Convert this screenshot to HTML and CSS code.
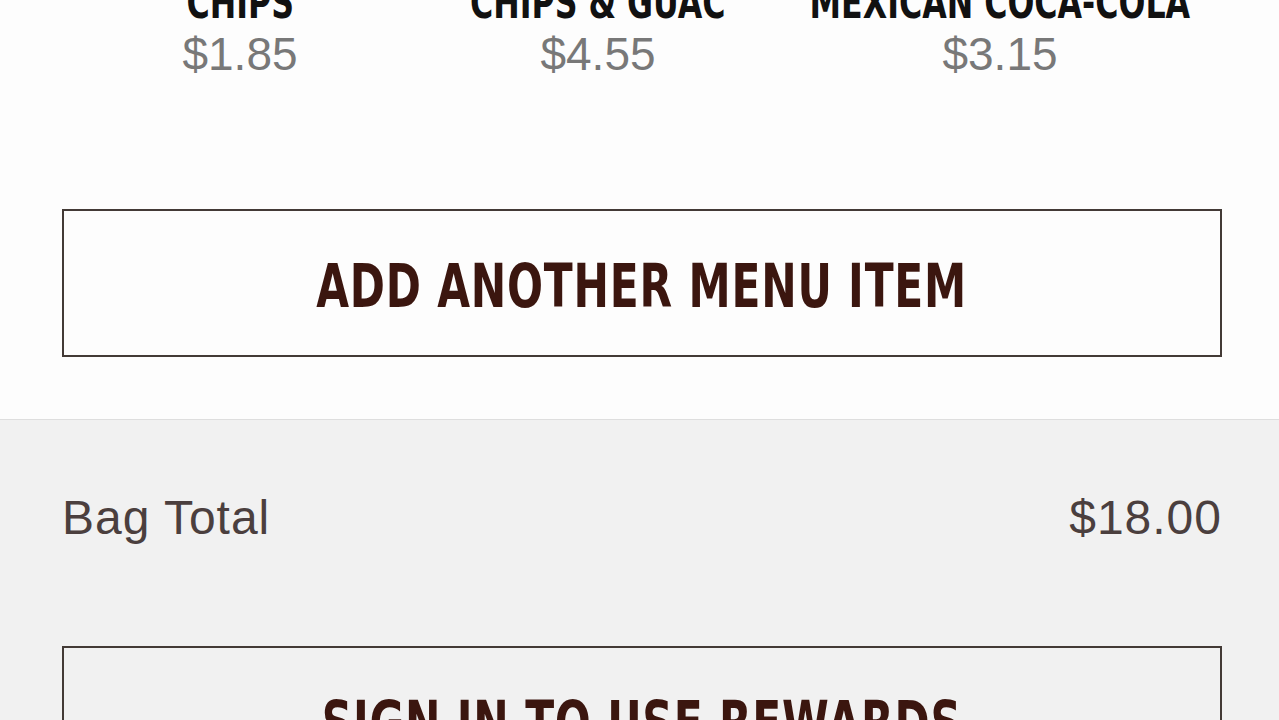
FILE: index.html
```html
<!DOCTYPE html>
<html lang="en">
<head>
  <meta charset="UTF-8" />
  <meta name="viewport" content="width=device-width, initial-scale=1.0"/>
  <title>Bag</title>
  <link rel="stylesheet" href="styles.css">
</head>
<body>
  <section class="sides">
    <div class="side-list">
      <div class="side">
        <div class="side-name"><span>Chips</span></div>
        <div class="side-price">$1.85</div>
      </div>
      <div class="side">
        <div class="side-name"><span>Chips &amp; Guac</span></div>
        <div class="side-price">$4.55</div>
      </div>
      <div class="side">
        <div class="side-name"><span>Mexican Coca-Cola</span></div>
        <div class="side-price">$3.15</div>
      </div>
    </div>
    <a class="btn"><span>Add Another Menu Item</span></a>
  </section>

  <section class="summary">
    <div class="total-row">
      <span>Bag Total</span>
      <span>$18.00</span>
    </div>
    <a class="btn"><span>Sign In To Use Rewards</span></a>
  </section>
</body>
</html>
```

FILE: styles.css
```css
* { box-sizing: border-box; }
body {
  margin: 0;
  font-family: 'Liberation Sans', Arial, sans-serif;
  background: #fdfdfd;
  color: #222;
  overflow: hidden;
}
.sides {
  padding: 0 57px 62px 62px;
  border-bottom: 1px solid #dedede;
}
.side-list {
  display: grid;
  grid-template-columns: 356px 360px minmax(0, 1fr);
  margin-top: -19px;
}
.side { text-align: center; }
.side-name,
.btn span {
  font-family: 'DejaVu Sans Condensed', 'DejaVu Sans', sans-serif;
  font-stretch: condensed;
  font-weight: bold;
  text-transform: uppercase;
  white-space: nowrap;
}
.side-name {
  display: flex;
  justify-content: center;
  font-size: 44px;
  line-height: 1;
  color: #111;
}
.side-name span,
.btn span {
  display: inline-block;
  flex-shrink: 0;
  transform: scaleX(0.8);
}
.side-price {
  font-size: 46px;
  line-height: 1;
  color: #787878;
  margin-top: 6px;
}
.btn {
  display: flex;
  align-items: center;
  justify-content: center;
  height: 148px;
  margin-top: 132px;
  padding-top: 6px;
  border: 2px solid #433a36;
  cursor: pointer;
}
.btn span {
  font-size: 60px;
  letter-spacing: 1px;
  color: #3b160f;
  transform: scaleX(0.785);
}
.summary {
  background: #f1f1f1;
  padding: 74px 57px 0 62px;
  height: 300px;
}
.total-row {
  display: flex;
  justify-content: space-between;
  font-size: 48px;
  line-height: 1;
  letter-spacing: 1px;
  color: #4b3f3e;
}
.summary .btn { margin-top: 104px; }
```
